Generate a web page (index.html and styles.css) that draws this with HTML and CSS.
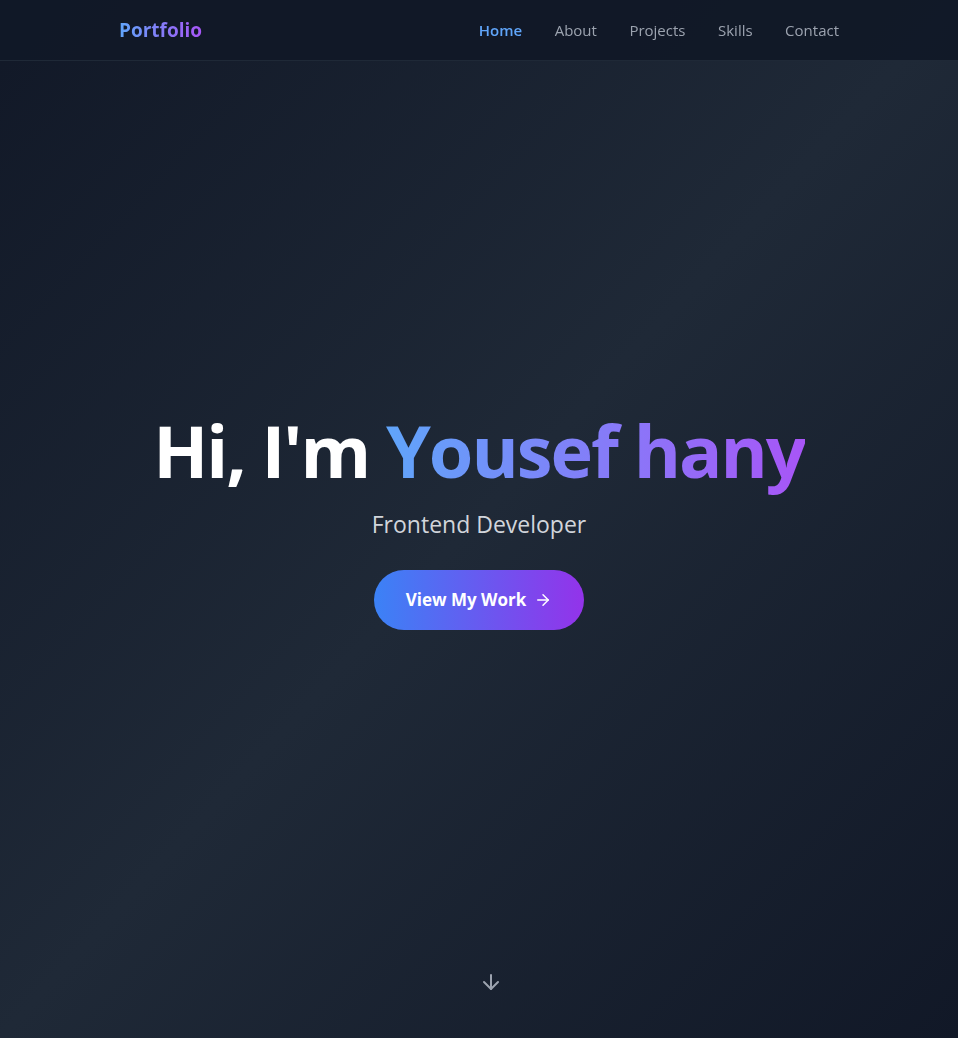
FILE: index.html
```html
<!DOCTYPE html>
<html lang="en">
<head>
<meta charset="utf-8">
<title>Portfolio</title>
<link rel="stylesheet" href="styles.css">
</head>
<body>
<header class="navbar">
  <div class="nav-inner">
    <a class="logo" href="#">Portfolio</a>
    <nav class="nav-links">
      <a class="active" href="#">Home</a>
      <a href="#">About</a>
      <a href="#">Projects</a>
      <a href="#">Skills</a>
      <a href="#">Contact</a>
    </nav>
  </div>
</header>
<main class="hero">
  <div class="hero-content">
    <h1 class="title">Hi, I'm <span class="gradient-text">Yousef hany</span></h1>
    <p class="subtitle">Frontend Developer</p>
    <a class="cta" href="#">View My Work
      <svg class="cta-icon" viewBox="0 0 24 24" width="20" height="20" fill="none" stroke="currentColor" stroke-width="2" stroke-linecap="round" stroke-linejoin="round"><path d="M5 12h14"/><path d="M12 5l7 7-7 7"/></svg>
    </a>
  </div>
  <div class="scroll-down">
    <svg viewBox="0 0 24 24" width="24" height="24" fill="none" stroke="currentColor" stroke-width="2" stroke-linecap="round" stroke-linejoin="round"><path d="M12 5v14"/><path d="M19 12l-7 7-7-7"/></svg>
  </div>
</main>
</body>
</html>
```
FILE: styles.css
```css
* { box-sizing: border-box; margin: 0; padding: 0; }
html, body { height: 100%; }
body {
  font-family: "Open Sans", "Noto Sans", "Liberation Sans", sans-serif;
  background: #111827;
  color: #fff;
}
a { text-decoration: none; color: inherit; }

.navbar {
  position: fixed;
  top: 0; left: 0; right: 0;
  height: 61px;
  background: rgba(17, 24, 39, 0.95);
  border-bottom: 1px solid #1f2937;
  z-index: 10;
}
.nav-inner {
  max-width: 768px;
  margin: 0 auto;
  padding: 0 24px;
  height: 60px;
  display: flex;
  align-items: center;
  justify-content: space-between;
}
.logo {
  font-size: 19px;
  font-weight: 700;
  background: linear-gradient(to right, #60a5fa, #a855f7);
  -webkit-background-clip: text;
  background-clip: text;
  color: transparent;
}
.nav-links { display: flex; gap: 32.5px; }
.nav-links a {
  font-size: 15px;
  color: #9ca3af;
}
.nav-links a.active { color: #60a5fa; font-weight: 600; }

.hero {
  position: relative;
  min-height: 100vh;
  padding-top: 5px;
  display: flex;
  align-items: center;
  justify-content: center;
  background: linear-gradient(to bottom right, #111827, #1f2937, #111827);
}
.hero-content {
  display: flex;
  flex-direction: column;
  align-items: center;
  text-align: center;
}
.title {
  font-size: 72px;
  line-height: 1;
  font-weight: 700;
  letter-spacing: -2px;
  margin-bottom: 22px;
}
.gradient-text {
  background: linear-gradient(to right, #60a5fa, #a855f7);
  -webkit-background-clip: text;
  background-clip: text;
  color: transparent;
}
.subtitle {
  font-size: 23px;
  line-height: 32px;
  color: #d1d5db;
  margin-bottom: 30px;
}
.cta {
  display: inline-flex;
  align-items: center;
  gap: 8px;
  height: 60px;
  padding: 0 32px;
  border-radius: 9999px;
  background: linear-gradient(to right, #3b82f6, #9333ea);
  font-size: 17px;
  font-weight: 700;
  color: #fff;
}
.cta-icon { width: 18px; height: 18px; }
.scroll-down {
  position: absolute;
  bottom: 44px;
  left: 50%;
  color: #9ca3af;
  display: flex;
}
```
